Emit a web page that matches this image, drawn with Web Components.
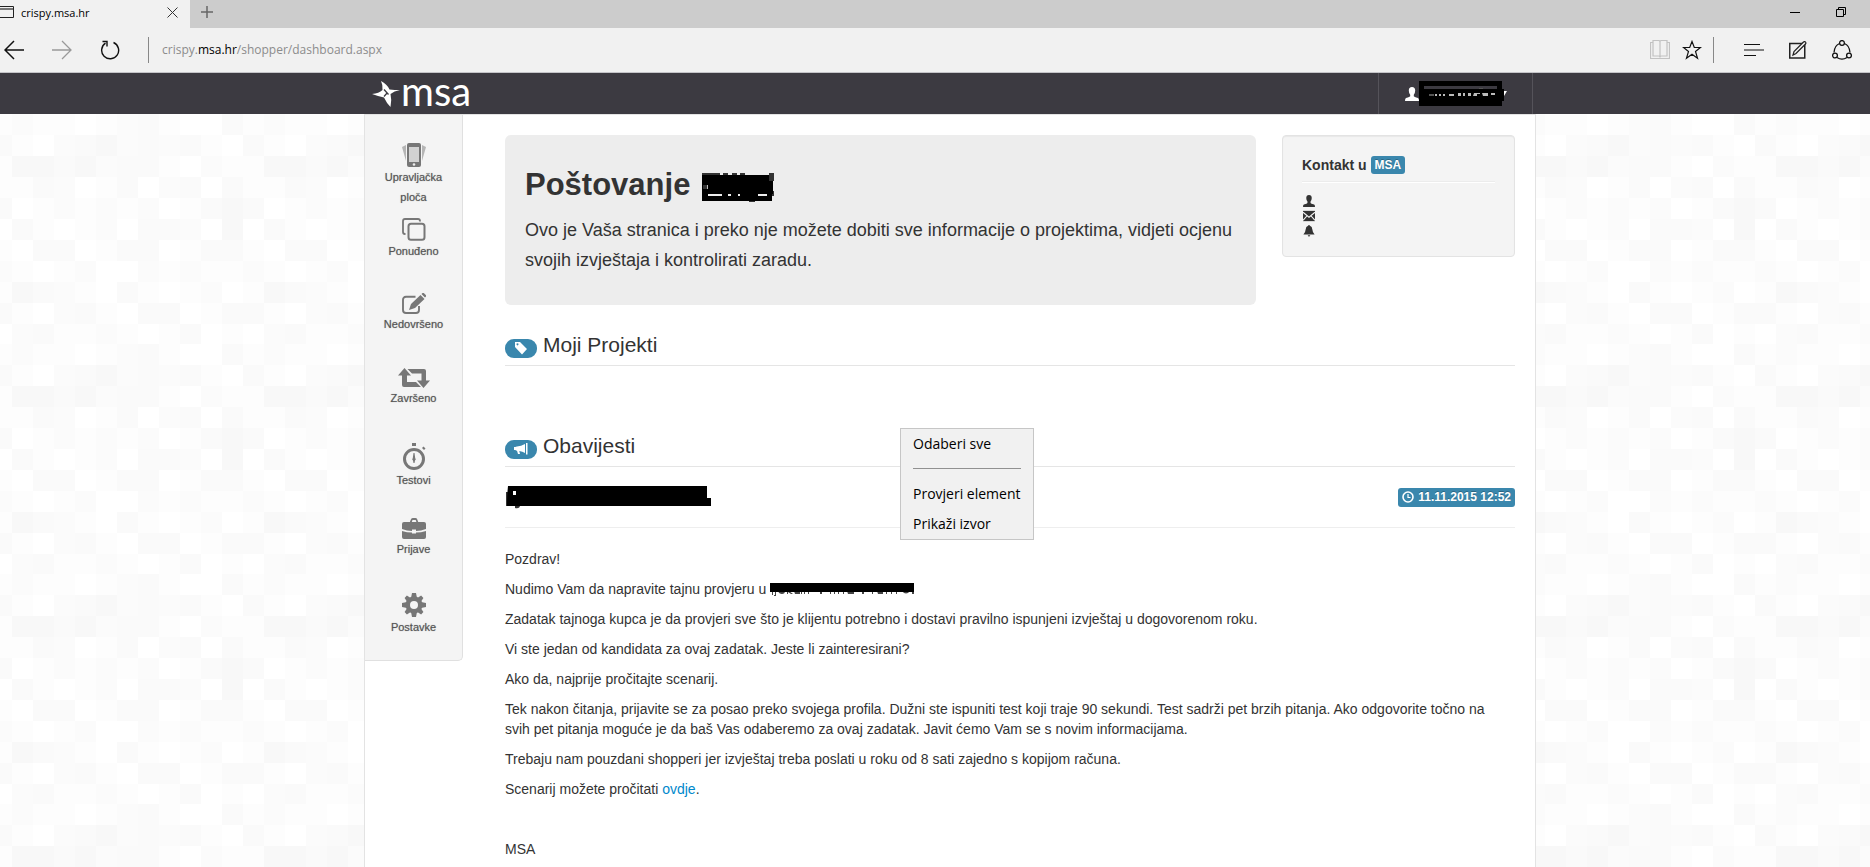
<!DOCTYPE html>
<html lang="hr">
<head>
<meta charset="utf-8">
<meta name="viewport" content="width=device-width, initial-scale=1">
<title>crispy.msa.hr</title>
<style>
  html, body { margin: 0; }
  body {
    min-height: 100vh;
    display: flex;
    flex-direction: column;
    font: 14px/20px "Liberation Sans", Arial, sans-serif;
    color: #333;
    background: #fff;
  }
  page-shell { flex: 1; }
  section-heading + section-heading { margin-top: 40px; }
  p { margin: 0 0 10px; }
  p:last-child { margin: 0; }
  a { color: #0088cc; text-decoration: none; }
</style>
</head>
<body>
  <browser-chrome></browser-chrome>
  <site-navbar></site-navbar>
  <page-shell>
    <side-nav slot="side">
      <side-nav-item icon="phone">Upravljačka ploča</side-nav-item>
      <side-nav-item icon="copy">Ponuđeno</side-nav-item>
      <side-nav-item icon="edit">Nedovršeno</side-nav-item>
      <side-nav-item icon="retweet">Završeno</side-nav-item>
      <side-nav-item icon="stopwatch">Testovi</side-nav-item>
      <side-nav-item icon="briefcase">Prijave</side-nav-item>
      <side-nav-item icon="cog">Postavke</side-nav-item>
    </side-nav>
    <welcome-row></welcome-row>
    <section-heading icon="tag">Moji Projekti</section-heading>
    <section-heading icon="bullhorn">Obavijesti</section-heading>
    <notice-entry date="11.11.2015 12:52">
      <p>Pozdrav!</p>
      <p>Nudimo Vam da napravite tajnu provjeru u <redacted-text kind="place"></redacted-text></p>
      <p>Zadatak tajnoga kupca je da provjeri sve što je klijentu potrebno i dostavi pravilno ispunjeni izvještaj u dogovorenom roku.</p>
      <p>Vi ste jedan od kandidata za ovaj zadatak. Jeste li zainteresirani?</p>
      <p>Ako da, najprije pročitajte scenarij.</p>
      <p>Tek nakon čitanja, prijavite se za posao preko svojega profila. Dužni ste ispuniti test koji traje 90 sekundi. Test sadrži pet brzih pitanja. Ako odgovorite točno na svih pet pitanja moguće je da baš Vas odaberemo za ovaj zadatak. Javit ćemo Vam se s novim informacijama.</p>
      <p>Trebaju nam pouzdani shopperi jer izvještaj treba poslati u roku od 8 sati zajedno s kopijom računa.</p>
      <p>Scenarij možete pročitati <a href="#scenarij">ovdje</a>.</p>
      <p>&nbsp;</p>
      <p>MSA</p>
    </notice-entry>
    <context-menu slot="menu"></context-menu>
  </page-shell>

<script>
const ICONS = {
  // browser window
  page: [14, 12, '<path d="M0 .5H13.500V11.500H0" fill="none" stroke="#222"/><path d="M0 3H13" stroke="#777" stroke-width="2"/>'],
  close: [11, 11, '<path d="M.5 .5l10 10M10.500 .5l-10 10" stroke="#333" fill="none"/>'],
  plus: [12, 12, '<path d="M0 6h12M6 0v12" stroke="#666" stroke-width="1.500" fill="none"/>'],
  minimize: [10, 10, '<path d="M0 5.500h10" stroke="#000"/>'],
  restore: [10, 10, '<path d="M.5 2.500h7v7h-7zM2.500 2.500v-2h7v7h-2" stroke="#000" fill="none"/>'],
  back: [20, 20, '<path d="M1 10h19M10 1l-9 9 9 9" stroke="#111" stroke-width="1.500" fill="none"/>'],
  forward: [20, 20, '<path d="M0 10h19M10 1l9 9-9 9" stroke="#999" stroke-width="1.300" fill="none"/>'],
  reload: [20, 20, '<path d="M13.500 2.500A8.500 8.500 0 1 1 5.500 3.200" stroke="#111" stroke-width="1.400" fill="none"/><path d="M2.500 1.500H7v5" stroke="#111" stroke-width="1.400" fill="none"/>'],
  book: [20, 20, '<path d="M3 2.500H.5v16h19v-16H17M3 .5h5.500q1.500 0 1.500 1.500 0-1.500 1.500-1.500H17V16h-5.500q-1.500 0-1.500 1.500Q10 16 8.500 16H3zM10 2v15" stroke="#c2c2c2" stroke-width="1.200" fill="none"/>'],
  star: [20, 20, '<path d="M10 1.500l2.300 6h6.200l-5 4 2 6.700L10 14.200l-5.500 4 2-6.700-5-4h6.200z" stroke="#111" stroke-width="1.200" fill="none"/>'],
  lines: [20, 12, '<path d="M0 .5h16M0 6h20M0 11.500h12" stroke="#111" stroke-width="1.200" fill="none"/>'],
  note: [18, 18, '<path d="M.75 2.500h15v14.500h-15z" stroke="#222" stroke-width="1.500" fill="none"/><path d="M4 14l1-3.500L14.500 1q1-.8 2 0 .8 1 0 2L7 12.500z" stroke="#222" stroke-width="1.200" fill="#f1f1f1"/>'],
  share: [20, 20, '<g stroke="#111" stroke-width="1.300" fill="none"><circle cx="10" cy="3" r="2.400"/><circle cx="3" cy="15.500" r="2.400"/><circle cx="17" cy="15.500" r="2.400"/><path d="M7.500 3.500Q2.500 5.500 2 12.500M12.500 3.500Q17.500 5.500 18 12.500M5 17.500q5 3.400 10 0"/></g>'],
  // logo mark
  spark: [28, 26, '<path fill="#fff" fill-rule="evenodd" d="M9 0q6 3 8.500 8.500 5 .5 10.500.5-6 1-9.500 4 1.500 6 0 13-4-4-6.500-9.500Q6 15 0 13q7-.5 10.500-4Q11 4 9 0z"/><path d="M12 8.500l4.500 5M12 15.500l3.500-4" stroke="#3c3a41" stroke-width="1.300"/>'],
  // page glyphs
  user: [14, 14, '<path fill="currentColor" d="M7 0q3.200.2 3.200 3.500 0 2.500-1.400 4.200v1.500Q9 9.800 13 11q1 .5 1 3H0q0-2.500 1-3 4-1.200 4.200-1.800V7.700Q3.800 6 3.800 3.500 3.800.2 7 0z"/>'],
  envelope: [14, 12, '<path fill="currentColor" d="M0 0h14v12H0z"/><path d="M0 1.500l7 6 7-6M0 11l4.500-5M14 11L9.500 6" stroke="#f4f4f4" stroke-width="1.300" fill="none"/>'],
  bell: [14, 14, '<path fill="currentColor" d="M7 0q1 0 1 1 2.800.8 3 4.500Q11.200 9 13.500 11H.5Q2.800 9 3 5.500 3.200 1.800 6 1q0-1 1-1zM5.500 12h3q-.3 1.500-1.500 1.500T5.500 12z"/>'],
  tag: [14, 14, '<path fill="#fff" d="M1 1h5l7 7-5 5.500L1 6zm2.500 1.300a1 1 0 1 0 .01 0z" fill-rule="evenodd"/>'],
  bullhorn: [14, 12, '<path fill="#fff" d="M11 1q-4 2.300-8 2.500Q1.500 3.500 1.500 4H0v3h1.500q0 .7 1.500.7L4 11h2l-.7-3Q8.500 8.300 11 10zM12 0h1.500v11.500H12z"/>'],
  clock: [12, 12, '<circle cx="6" cy="6" r="5" stroke="#fff" stroke-width="1.600" fill="none"/><path d="M6 3v3.500h2.500" stroke="#fff" stroke-width="1.200" fill="none"/>'],
  phone: [24, 24, '<path fill="#b5b5b5" d="M0 4l4-2v16zM24 4l-4-2v16z"/><rect x="5" width="14" height="24" rx="2" fill="#777"/><path fill="#d2d2d2" d="M7 4h10v15H7z"/><circle cx="12" cy="21.500" r="1.300" fill="#eee"/>'],
  copy: [24, 23, '<path d="M18 3.500V3q0-2-2-2H3Q1 1 1 3v11q0 2 2 2h.5" stroke="#777" stroke-width="1.800" fill="none"/><rect x="6.500" y="5.800" width="16" height="16" rx="2.500" stroke="#777" stroke-width="2" fill="none"/>'],
  edit: [24, 21, '<path d="M13.500 3.800H4q-3 0-3 3V17q0 3 3 3h10q3 0 3-3v-4" stroke="#777" stroke-width="1.900" fill="none"/><path fill="#777" d="M7 17l2-6L18.500 2l4 4L13 15zM19.500 1l1-1q.8-.4 1.500.2l2 2q.4.8 0 1.300l-1 1z"/>'],
  retweet: [32, 20, '<path fill="#777" d="M6.500 0l6.500 7.500H9V14h9l5 5H6q-2 0-2-2V7.500H0zM25.500 20L19 12.500h4.500V5.500H14L9.500 1H26q2 0 2 2v9.500h4z"/>'],
  stopwatch: [24, 27, '<circle cx="12" cy="16" r="9.500" stroke="#777" stroke-width="3" fill="none"/><path fill="#777" d="M10 0h4v3h-4zM20 5l1.500-1.500 2 2L22 7zM11.500 10h1l.7 5q1.300 1.500-.2 2.500l-.5 2.500h-1l-.5-2.500q-1.500-1-.2-2.500z"/>'],
  briefcase: [24, 21, '<path fill="#777" fill-rule="evenodd" d="M8 3.500L9 1.200Q9.500 0 11 0h2.500q1.200 0 1.700 1.200L16.200 4H22q2 0 2 2v5q-5 2-10 2v-1.500h-4V13q-5 0-10-2V6q0-2 2-2h6zm1.800.5h4.600l-.7-2H10.500zM0 13q5 1.500 10 1.600v.9h4v-.9q5-.1 10-1.600v6q0 2-2 2H2q-2 0-2-2z"/>'],
  cog: [24, 24, '<g fill="#777"><circle cx="12" cy="12" r="8.500"/><path d="M10 0h4l1 5H9zM10 24h4l1-5H9zM0 10v4l5 1V9zM24 10v4l-5 1V9zM2.600 4.900l2.300-2.300 4.500 3-3.800 3.800zM21.400 19.100l-2.300 2.300-4.500-3 3.800-3.800zM2.600 19.100l2.300 2.300 4.500-3-3.800-3.800zM21.400 4.900l-2.300-2.300-4.500 3 3.800 3.800z"/></g><circle cx="12" cy="12" r="4" fill="#f4f4f4"/>'],
};

const REDACTIONS = {
  // [width, height, drawing]
  name: [72, 32, '<path d="M0 0h18v3H0zM21 0h5v3h-5zM30 0h5v3h-5zM38 0h5v3h-5zM67 0h5v8h-5zM68 18h4v5h-4zM47 25h6v4h-6z" fill="#333"/><path d="M0 2h67v6h4v13h-1v7H0z"/><path d="M6 21h59v2H6z" fill="#ededed"/><path d="M20 21h6v2h-6zM29 21h7v2h-7zM38 21h18v2H38z"/><path d="M1 12h5v4H1z" fill="#bbb"/><path d="M1 12h4v4H1z" fill="#333"/>'],
  account: [88, 25, '<path d="M0 0h83v8h2v12h-2v5H0z"/><path d="M5 5h73v3H5z" fill="#3c3a41"/><path d="M10 13h5v2h-5zM60 7h4v1h-4z" fill="#555"/><path d="M16 13h2v2h-2zM20 13h2v2h-2zM24 13h2v2h-2zM30 13h5v2h-5zM39 12h3v3h-3zM44 12h2v3h-2zM49 12h3v3h-3zM55 12h6v1h-3v2h-4zM63 12h6v3h-5zM72 12h4v2h-4z" fill="#bbb"/><path d="M85 10h3l-3 5z" fill="#fff"/>'],
  title: [206, 23, '<path d="M1 6h3v14H1zM10 19h5q0 4-5 3z" fill="#333"/><path d="M3 0h186v11h4v8H2z"/><path d="M3 0h199v12h4v8H2z"/><path d="M8 5h3v4H8z" fill="#fff"/>'],
  place: [145, 14, '<path d="M2 8h1v4H2zM6 9v4H4v-1h1V8zM8 8h7q0 3-3 3t-4-3zM17 8h2l4 3h-2l-3-2v2h-1zM24 8h6v3h-5zM31 8h1v3h-1zM34 8h1v3h-1zM38 8h1v3h-1zM50 8h2v3h-2zM60 8h1v3h-1zM64 8h1v3h-1zM68 8h1v3h-1zM73 8h1v3h-1zM77 8h7v3h-6zM92 8h2v3h-2zM102 8h1v3h-1zM107 8h6v3h-5zM116 8h1v3h-1zM121 8h1v3h-1zM126 8h1v3h-1zM132 8h8q-4 5-8 0zM142 9h2v2h-2z" fill="#444"/><path d="M0 0h144v9H0z"/>'],
};

const svg = ([w, h, body]) =>
  `<svg width="${w}" height="${h}" viewBox="0 0 ${w} ${h}" aria-hidden="true">${body}</svg>`;

// Defines an element whose shadow root is built from a template function.
const define = (tag, css, html) => {
  customElements.define(tag, class extends HTMLElement {
    constructor() {
      super();
      this.attachShadow({ mode: 'open' });
    }
    connectedCallback() {
      const t = document.createElement('template');
      t.innerHTML = `<style>*{box-sizing:border-box}svg{display:block}${css}</style>` + html(this);
      this.shadowRoot.replaceChildren(t.content.cloneNode(true));
    }
  });
};

define('ui-icon', ':host{display:inline-block;flex:none}:host([small]) svg{width:12px;height:12px}', el => svg(ICONS[el.getAttribute('name')]));
define('redacted-text', ':host{display:inline-block;vertical-align:middle;flex:none}', el => svg(REDACTIONS[el.getAttribute('kind')]));

define('browser-chrome', `
  :host{display:block;font:12px/16px "Open Sans","Noto Sans",sans-serif;color:#000;background:#f1f1f1;border-bottom:1px solid #c4c4c8}
  button{border:0;background:none;padding:0;display:flex}
  .tabs{display:flex;height:28px;background:#ccc;align-items:stretch}
  .tab{width:190px;background:#f1f1f1;display:flex;align-items:center;padding:0 12px 4px 0;gap:7px}
  .tab span{flex:1;padding-top:2px;font-size:11px}
  .new{align-items:center;padding:0 0 4px 11px}
  .win{margin-left:auto;display:flex;gap:36px;align-items:center;padding:0 24px 4px 0}
  .bar{display:flex;align-items:center;height:44px;padding:0 18px 0 4px}
  .nav{display:flex;gap:28px;padding-right:28px}
  .sep{width:1px;height:26px;background:#888}
  .url{flex:1;padding-left:13px;color:#8c8c8c}
  .url b{font-weight:400;color:#000}
  .page{display:flex;gap:12px;padding-right:11px}
  .tools{display:flex;align-items:center;gap:25px;padding-left:30px}
`, () => `
  <div class="tabs">
    <div class="tab"><ui-icon name="page"></ui-icon><span>crispy.msa.hr</span><button aria-label="Zatvori karticu"><ui-icon name="close"></ui-icon></button></div>
    <button class="new" aria-label="Nova kartica"><ui-icon name="plus"></ui-icon></button>
    <div class="win"><button aria-label="Minimiziraj"><ui-icon name="minimize"></ui-icon></button><button aria-label="Vrati"><ui-icon name="restore"></ui-icon></button></div>
  </div>
  <div class="bar">
    <div class="nav"><button aria-label="Natrag"><ui-icon name="back"></ui-icon></button><button aria-label="Naprijed"><ui-icon name="forward"></ui-icon></button><button aria-label="Osvježi"><ui-icon name="reload"></ui-icon></button></div>
    <div class="sep"></div>
    <div class="url">crispy.<b>msa.hr</b>/shopper/dashboard.aspx</div>
    <div class="page"><button aria-label="Čitanje"><ui-icon name="book"></ui-icon></button><button aria-label="Favoriti"><ui-icon name="star"></ui-icon></button></div>
    <div class="sep"></div>
    <div class="tools"><button aria-label="Središte"><ui-icon name="lines"></ui-icon></button><button aria-label="Bilješka"><ui-icon name="note"></ui-icon></button><button aria-label="Dijeli"><ui-icon name="share"></ui-icon></button></div>
  </div>`);

define('site-navbar', `
  :host{display:block;background:#3c3a41;padding-left:30px}
  .in{max-width:1170px;height:41px;margin:0 auto;padding-right:2px;display:flex;justify-content:space-between}
  .logo{display:flex;align-items:center;padding-left:7px;color:#fff;text-decoration:none;font:40px/41px Lato,sans-serif}
  .logo span{padding:0 0 4px 1px}
  .user{display:flex;align-items:center;padding:0 25px 0 26px;border:0;border-left:1px solid #55535a;border-right:1px solid #55535a;background:none;color:#fff}
`, () => `
  <div class="in">
    <a class="logo" href="#pocetna"><ui-icon name="spark"></ui-icon><span>msa</span></a>
    <button class="user" aria-label="Korisnik"><ui-icon name="user"></ui-icon><redacted-text kind="account"></redacted-text></button>
  </div>`);

// Mosaic backdrop: one digit per tile, from white (0) to the darkest grey (4).
const MOSAIC = ['211012310031', '102342323103', '443423310211', '132013023031', '012121201343', '310120332040',
                '033013301331', '101200212112', '432103101201', '102310330133', '231121013010'];
const SHADES = ['#fff', '#fdfdfd', '#fbfbfb', '#fafafa', '#f8f8f8'];
const mosaic = 'data:image/svg+xml,' + encodeURIComponent(
  '<svg xmlns="http://www.w3.org/2000/svg" width="252" height="230">' +
  MOSAIC.map((row, y) => [...row].map((s, x) =>
    `<rect x="${x * 21}" y="${y * 21}" width="21" height="21" fill="${SHADES[s]}"/>`).join('')).join('') + '</svg>');

define('page-shell', `
  :host{display:flex;padding-left:30px;background:url("${mosaic}") 12px 0}
  .sheet{position:relative;width:100%;max-width:1172px;margin:0 auto;display:flex;align-items:flex-start;background:#fff;border:1px solid #e3e3e3;border-bottom:0}
  main{flex:1;min-width:0;padding:20px 20px 0 42px}
`, () => `<div class="sheet"><slot name="side"></slot><main><slot></slot></main><slot name="menu"></slot></div>`);

define('side-nav', `
  :host{display:block;flex:none;width:97px;background:#f4f4f4;border-right:1px solid #e0e0e0;border-bottom:1px solid #e0e0e0;border-radius:0 0 5px 0}
  nav{display:flex;flex-direction:column;gap:8px;padding:28px 0 0}
`, () => '<nav><slot></slot></nav>');

define('side-nav-item', `
  :host{display:block}
  a{display:flex;flex-direction:column;align-items:center;min-height:67px;padding:0 12px;font-size:11px;line-height:20px;color:#555;text-align:center;text-decoration:none;text-shadow:0 0 1px #999}
`, el => `<a href="#"><ui-icon name="${el.getAttribute('icon')}"></ui-icon><span><slot></slot></span></a>`);

define('welcome-row', `
  :host{display:flex;align-items:flex-start;gap:26px}
  .hero{flex:1;background:#ededed;border-radius:6px;padding:30px 20px}
  h1{display:flex;align-items:flex-end;gap:12px;margin:0 0 10px;font-size:31px;line-height:40px}
  p{margin:0;font-size:18px;line-height:30px}
  aside{width:233px;height:122px;background:#f4f4f4;border:1px solid #e3e3e3;border-radius:4px;box-shadow:inset 0 1px 1px rgba(0,0,0,.05);padding:19px}
  h2{margin:0;padding-bottom:6px;font-size:14px;line-height:20px;border-bottom:1px solid #ececec;box-shadow:0 1px #fff;display:flex;align-items:center;gap:4px}
  .label{background:#3a87ad;color:#fff;font-size:12px;line-height:18px;padding:0 4px;border-radius:3px;text-shadow:0 -1px 0 rgba(0,0,0,.25)}
  ul{list-style:none;margin:11px 0 0;padding:0 0 0 1px}
  li{height:15px;display:flex;align-items:center}
`, () => `
  <section class="hero">
    <h1><span>Poštovanje</span><redacted-text kind="name"></redacted-text></h1>
    <p>Ovo je Vaša stranica i preko nje možete dobiti sve informacije o projektima, vidjeti ocjenu svojih izvještaja i kontrolirati zaradu.</p>
  </section>
  <aside>
    <h2>Kontakt u <span class="label">MSA</span></h2>
    <ul><li><ui-icon small name="user"></ui-icon></li><li><ui-icon small name="envelope"></ui-icon></li><li><ui-icon small name="bell"></ui-icon></li></ul>
  </aside>`);

define('section-heading', `
  :host{display:block;padding-top:19px}
  h2{margin:0;height:42px;display:flex;align-items:center;gap:6px;font-weight:400;font-size:21px;line-height:40px;border-bottom:1px solid #e5e5e5}
  i{display:flex;align-items:center;justify-content:center;width:32px;height:19px;margin-top:7px;border-radius:9px;background:#3a87ad}
`, el => `<h2><i><ui-icon name="${el.getAttribute('icon')}"></ui-icon></i><slot></slot></h2>`);

define('notice-entry', `
  :host{display:block}
  header{display:flex;justify-content:space-between;align-items:center;height:61px;margin-bottom:21px;border-bottom:1px solid #eee}
  time{display:flex;align-items:center;gap:4px;background:#3a87ad;color:#fff;font-weight:700;font-size:12px;line-height:19px;padding:0 4px;border-radius:3px;text-shadow:0 -1px 0 rgba(0,0,0,.25)}
  article{padding-right:10px}
`, el => `<header><redacted-text kind="title"></redacted-text><time><ui-icon name="clock"></ui-icon>${el.getAttribute('date')}</time></header><article><slot></slot></article>`);

define('context-menu', `
  :host{position:absolute;left:535px;top:313px;padding:0 12px;background:#f1f1f1;border:1px solid #c6c6c6;font:14px/30px "Open Sans","Noto Sans",sans-serif;color:#000}
  button{display:block;width:100%;border:0;padding:0;background:none;font:inherit;color:inherit;text-align:left}
  hr{margin:9px 0 10px;border:0;border-top:1px solid #919191}
`, () => '<button>Odaberi sve</button><hr><button>Provjeri element</button><button>Prikaži izvor</button>');
</script>
</body>
</html>
